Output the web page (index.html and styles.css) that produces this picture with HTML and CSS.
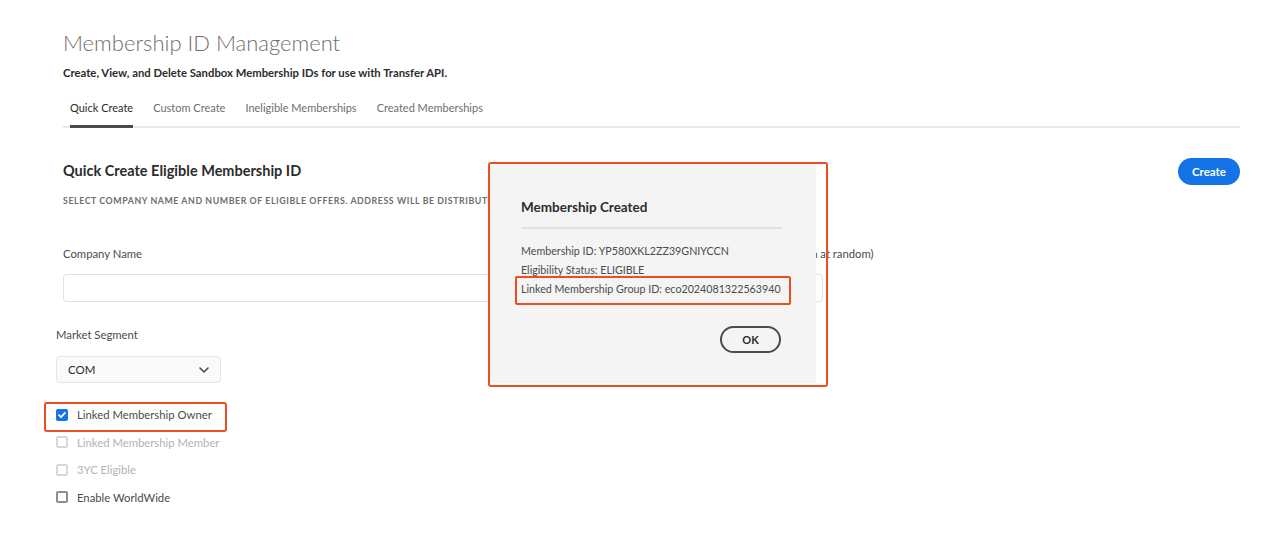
FILE: index.html
```html
<!DOCTYPE html>
<html>
<head>
<meta charset="utf-8">
<title>Membership ID Management</title>
<link rel="stylesheet" href="styles.css">
</head>
<body>
<div class="page">
	<h1 class="title">Membership ID Management</h1>
	<p class="subtitle">Create, View, and Delete Sandbox Membership IDs for use with Transfer API.</p>

	<div class="tabs">
		<span class="tab active">Quick Create</span>
		<span class="tab">Custom Create</span>
		<span class="tab">Ineligible Memberships</span>
		<span class="tab">Created Memberships</span>
	</div>

	<div class="panel">
		<div class="panel-head">
			<h2>Quick Create Eligible Membership ID</h2>
			<button class="btn-primary">Create</button>
		</div>
		<p class="caption">Select company name and number of eligible offers. Address will be distributor address.</p>

		<div class="field-row">
			<div class="field field-name">
				<label>Company Name</label>
				<div class="input"></div>
			</div>
			<div class="field field-offers">
				<label>Number of Eligible Offers (chosen at random)</label>
				<div class="input"></div>
			</div>
		</div>

		<div class="segment">
			<label>Market Segment</label>
			<div class="select">
				<span>COM</span>
				<svg width="10" height="6" viewBox="0 0 10 6"><path d="M1 1l4 4 4-4" fill="none" stroke="#4b4b4b" stroke-width="1.6" stroke-linecap="round" stroke-linejoin="round"/></svg>
			</div>
		</div>

		<ul class="checks">
			<li class="check marked">
				<span class="box checked"><svg width="10" height="10" viewBox="0 0 10 10"><path d="M2 5.2l2 2 4-4.4" fill="none" stroke="#fff" stroke-width="1.8" stroke-linecap="round" stroke-linejoin="round"/></svg></span>
				Linked Membership Owner
			</li>
			<li class="check disabled"><span class="box"></span>Linked Membership Member</li>
			<li class="check disabled"><span class="box"></span>3YC Eligible</li>
			<li class="check"><span class="box"></span>Enable WorldWide</li>
		</ul>
	</div>
</div>

<div class="dialog">
	<h3>Membership Created</h3>
	<div class="dialog-body">
		<p>Membership ID: YP580XKL2ZZ39GNIYCCN</p>
		<p>Eligibility Status: ELIGIBLE</p>
		<p class="marked-line">Linked Membership Group ID: eco2024081322563940</p>
	</div>
	<div class="dialog-foot">
		<button class="btn-outline">OK</button>
	</div>
</div>
<div class="mark-dialog"></div>
</body>
</html>
```

FILE: styles.css
```css
* {
	box-sizing: border-box;
}

body, h1, h2, h3, p, ul, li {
	margin: 0;
	padding: 0;
}

body {
	font-family: Lato, "Open Sans", sans-serif;
	color: #4b4b4b;
	background: #fff;
	width: 1280px;
	height: 550px;
	overflow: hidden;
	position: relative;
}

.page {
	padding: 28px 40px 0 63px;
}

.title {
	font-size: 22px;
	font-weight: 300;
	color: #6e6e6e;
	line-height: 30px;
}

.subtitle {
	margin-top: 7px;
	font-size: 11.3px;
	font-weight: 700;
	color: #2c2c2c;
	line-height: 16px;
}

/* tabs */
.tabs {
	display: flex;
	gap: 20px;
	margin-top: 19px;
	padding-left: 7px;
	border-bottom: 2px solid #e9e9e9;
}
.tab {
	font-size: 11px;
	color: #6e6e6e;
	line-height: 16px;
	padding-bottom: 9px;
	margin-bottom: -2px;
	border-bottom: 3px solid transparent;
}
.tab.active {
	color: #2c2c2c;
	border-bottom-color: #4b4b4b;
}

/* panel */
.panel {
	padding-top: 30px;
}
.panel-head {
	display: flex;
	justify-content: space-between;
	align-items: center;
	height: 27px;
}
.panel-head h2 {
	font-size: 14.5px;
	font-weight: 700;
	color: #2c2c2c;
	margin-top: -2px;
}
.btn-primary {
	height: 27px;
	padding: 0 14px;
	border: none;
	border-radius: 14px;
	background: #1473e6;
	color: #fff;
	font-family: inherit;
	font-size: 11.5px;
	font-weight: 700;
}

.caption {
	margin-top: 10px;
	font-size: 8.8px;
	font-weight: 700;
	letter-spacing: 0.065em;
	text-transform: uppercase;
	color: #6e6e6e;
	line-height: 12px;
}

.field-row {
	display: flex;
	gap: 20px;
	margin-top: 39px;
	width: 760px;
}
.field label {
	display: block;
	font-size: 11.3px;
	color: #4b4b4b;
	line-height: 16px;
	white-space: nowrap;
}
.field-name {
	flex: 1;
}
.field-offers {
	width: 172px;
}
.input {
	height: 28px;
	margin-top: 12px;
	border: 1px solid #e1e1e1;
	border-radius: 4px;
	background: #fff;
}

.segment {
	margin-top: 25px;
	margin-left: -7px;
}
.segment label {
	display: block;
	font-size: 11.3px;
	line-height: 16px;
	color: #4b4b4b;
}
.select {
	display: flex;
	justify-content: space-between;
	align-items: center;
	width: 165px;
	height: 27px;
	margin-top: 13px;
	padding: 0 11px;
	border: 1px solid #e5e5e5;
	border-radius: 4px;
	background: #fafafa;
	font-size: 11.5px;
	color: #2c2c2c;
}

/* checkboxes */
.checks {
	list-style: none;
	margin-top: 18px;
	margin-left: -7px;
}
.check {
	display: flex;
	align-items: center;
	gap: 9px;
	height: 27.5px;
	font-size: 11.3px;
	color: #4b4b4b;
	position: relative;
}
.check.disabled {
	color: #b3b3b3;
}
.box {
	width: 12px;
	height: 12px;
	border: 2px solid #8e8e8e;
	border-radius: 2px;
	display: flex;
	align-items: center;
	justify-content: center;
}
.check.disabled .box {
	border-color: #d8d8d8;
}
.box.checked {
	border: none;
	background: #1473e6;
}
.check.marked::after {
	content: "";
	position: absolute;
	left: -12px;
	top: 1px;
	width: 179px;
	height: 26px;
	border: 2px solid #ec4e20;
	border-radius: 3px;
}

/* dialog */
.dialog {
	position: absolute;
	left: 490px;
	top: 165px;
	width: 326px;
	height: 218px;
	background: #f4f4f4;
	padding: 32px 20px 0 31px;
}
.dialog h3 {
	font-size: 13.5px;
	font-weight: 700;
	color: #2c2c2c;
	line-height: 20px;
	padding-bottom: 10px;
	border-bottom: 2px solid #e1e1e1;
	margin-right: 14px;
}
.dialog-body {
	margin-top: 12px;
}
.dialog-body p {
	font-size: 10.7px;
	line-height: 19px;
	color: #4b4b4b;
	white-space: nowrap;
}
.marked-line {
	position: relative;
}
.marked-line::after {
	content: "";
	position: absolute;
	left: -6px;
	top: -3px;
	width: 272px;
	height: 25px;
	border: 2px solid #ec4e20;
	border-radius: 2px;
}
.dialog-foot {
	display: flex;
	justify-content: flex-end;
	margin-top: 28px;
	margin-right: 15px;
}
.btn-outline {
	width: 61px;
	height: 27px;
	border: 2px solid #4b4b4b;
	border-radius: 14px;
	background: transparent;
	color: #2c2c2c;
	font-family: inherit;
	font-size: 11px;
	font-weight: 700;
}

.mark-dialog {
	position: absolute;
	left: 488px;
	top: 162px;
	width: 340px;
	height: 225px;
	border: 2px solid #ec4e20;
	border-radius: 3px;
}
```
